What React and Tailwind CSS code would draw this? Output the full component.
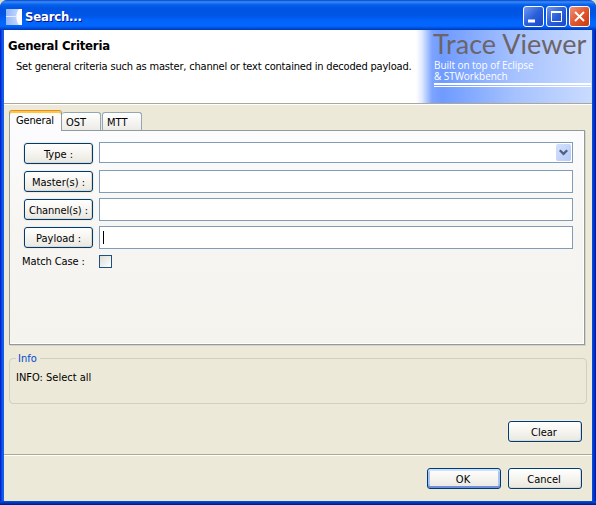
import React from 'react';

function CommandButton({ children, className = '', primary = false }) {
  return (
    <button
      className={`flex shrink-0 items-center justify-center whitespace-nowrap rounded-[3px] border border-[#003c74] bg-linear-to-b from-white via-[#f5f4ef] to-[#e9e7df] pt-0.5 text-[11px] leading-[13px] ${
        primary
          ? 'shadow-[inset_0_2px_0_#cee0fc,inset_0_-2px_0_#6d8fdd,inset_2px_0_0_#a9c3f3,inset_-2px_0_0_#a9c3f3]'
          : 'shadow-[inset_-1px_-1px_0_#dcd8cf,0_0_0_1px_#f0eee3]'
      } ${className}`}
    >
      {children}
    </button>
  );
}

function FieldRow({ label, spacing = '', children, height = 'h-[23px]' }) {
  return (
    <div className="flex h-7 items-start">
      <CommandButton className={`mr-1.5 mt-px h-[21px] w-[69px] ${spacing}`}>{label}</CommandButton>
      <div className={`flex w-[474px] items-center border border-[#7f9db9] bg-white ${height}`}>{children}</div>
    </div>
  );
}

function TitleButton({ close = false, children }) {
  return (
    <button
      className={`flex h-[21px] w-[21px] items-center justify-center rounded-[3px] border border-white ${
        close
          ? 'bg-linear-to-br from-[#ee9077] via-[#e2562e] to-[#c93b0c]'
          : 'bg-linear-to-br from-[#7397ee] via-[#2a5fdc] to-[#1c49c8]'
      }`}
    >
      <svg width="19" height="19" viewBox="0 0 19 19" fill="none">
        {children}
      </svg>
    </button>
  );
}

function TitleBar() {
  return (
    <header className="flex h-[30px] shrink-0 items-center rounded-t-[7px] bg-[linear-gradient(to_bottom,#0144d0_0px,#3f8cf5_2px,#2176f2_3px,#0360ed_5px,#0054e3_8px,#0055e5_15px,#0264fb_21px,#0267ff_26px,#0050dc_28px,#0038b8_30px)] pl-1.5 pr-[6px] pt-[3px]">
      <svg width="16" height="16" viewBox="0 0 16 16">
        <defs>
          <linearGradient id="app" x1="0" x2="1" y1="0" y2="0">
            <stop offset="0" stopColor="#8fb5fb" />
            <stop offset="1" stopColor="#d4e3ff" />
          </linearGradient>
        </defs>
        <rect width="16" height="16" fill="url(#app)" />
        <path d="M0 7.5h10" stroke="#e3edff" />
        <path d="M13 0h3v16h-3C10 12 9 5 13 0z" fill="#fff" />
      </svg>
      <h1 className="ml-[3px] grow whitespace-nowrap text-[13px] font-bold leading-4 tracking-[-0.2px] text-white [text-shadow:1px_1px_0_#0f1089]">
        Search...
      </h1>
      <div className="flex gap-0.5">
        <TitleButton>
          <path d="M4 14h7" stroke="#fff" strokeWidth="3" />
        </TitleButton>
        <TitleButton>
          <path d="M4.5 4.5h10v10h-10z" stroke="#fff" />
          <path d="M4 5h11" stroke="#fff" strokeWidth="2" />
        </TitleButton>
        <TitleButton close>
          <path d="M5 5l9 9M14 5l-9 9" stroke="#fff" strokeWidth="2" />
        </TitleButton>
      </div>
    </header>
  );
}

function Banner() {
  return (
    <section className="flex h-[73px] shrink-0 bg-white">
      <div className="w-[412px] shrink-0 whitespace-nowrap">
        <h2 className="ml-1 mt-2 text-[13px] font-bold leading-[15px] tracking-[-0.2px]">General Criteria</h2>
        <p className="ml-3 mt-[7px] text-[11px] leading-[14px] tracking-[-0.19px]">
          Set general criteria such as master, channel or text contained in decoded payload.
        </p>
      </div>
      <div className="w-44 bg-[linear-gradient(to_right,#fff_0px,#dfe9ff_6px,#7da4ff_16px,#6f9bff_26px,#a6c2ff_100px,#c9dbff_176px)] pl-[17px] whitespace-nowrap text-white [font-stretch:normal]">
        <div className="h-[29px] font-['Lato'] text-[27px] leading-[27px] tracking-[0.05px] text-[#6d6468]">Trace Viewer</div>
        <div className="h-6 pl-px pt-px font-['Open_Sans'] text-[10px] leading-[11px] tracking-[-0.05px]">
          <div>Built on top of Eclipse</div>
          <div>&amp; STWorkbench</div>
        </div>
        <div className="ml-px h-1 w-[157px] border-b border-t-2 border-white" />
      </div>
    </section>
  );
}

function Tab({ children, className }) {
  return (
    <div className={`mt-0.5 h-[18px] rounded-t-[3px] border border-b-0 border-[#91a7b4] bg-linear-to-b from-white to-[#ecebe6] pl-1 pt-[3px] text-[11px] leading-[14px] ${className}`}>
      {children}
    </div>
  );
}

function CriteriaTabs() {
  return (
    <section className="ml-[5px] mt-[5px] w-[576px] shrink-0">
      <nav className="flex h-5">
        <div className="z-10 h-[21px] w-[53px] rounded-t-[3px] border-x border-t border-x-[#919b9c] border-t-[#e68b2c] bg-[#fcfcfe] pl-1.5 pt-[3px] text-[11px] leading-[14px] tracking-[-0.15px] shadow-[inset_0_2px_0_#ffc73c]">
          General
        </div>
        <Tab className="w-[39px] border-l-0">OST</Tab>
        <Tab className="ml-px w-10">MTT</Tab>
      </nav>
      <div className="h-[215px] border border-[#919b9c] bg-linear-to-b from-[#fcfcfe] via-[#f6f5f1] to-[#f4f3ee] pl-3.5 pt-[11px] shadow-[inset_-1px_-1px_0_#fff,1px_1px_0_#d7d3c2]">
        <FieldRow label="Type :" height="h-[21px]">
          <div className="ml-auto mr-px flex h-[17px] w-[15px] items-center justify-center rounded-[2px] bg-linear-to-br from-[#d5e1fd] to-[#b5caf8]">
            <svg width="9" height="7" viewBox="0 0 9 7" fill="none">
              <path d="M.8 1.2l3.7 3.6 3.7-3.6" stroke="#4d6185" strokeWidth="2.3" />
            </svg>
          </div>
        </FieldRow>
        <FieldRow label="Master(s) :" />
        <FieldRow label="Channel(s) :" spacing="tracking-[-0.1px]" />
        <FieldRow label="Payload :">
          <span className="ml-[3px] h-[13px] w-px bg-black" />
        </FieldRow>
        <div className="-ml-0.5 mt-px flex h-[13px] items-center text-[11px] leading-[13px]">
          <span className="w-[77px] whitespace-nowrap tracking-[-0.1px]">Match Case :</span>
          <span className="h-[13px] w-[13px] border border-[#1c5180] bg-linear-to-br from-[#dcdcd7] to-white" />
        </div>
      </div>
    </section>
  );
}

export default function App() {
  return (
    <div className="h-[505px] w-[596px] overflow-hidden bg-[#d8dfd0] text-black [font-family:'DejaVu_Sans_Condensed','DejaVu_Sans',sans-serif] [font-stretch:condensed]">
      <main className="flex h-full flex-col overflow-hidden rounded-t-[7px] bg-[linear-gradient(to_right,#0019cf_0px,#0831d9_1px,#166aee_3px,#0855dd_4px,#0855dd_592px,#0441d8_593px,#0029c0_595px,#00138c_596px)]">
        <TitleBar />
        <div className="mx-1 flex h-[471px] shrink-0 flex-col bg-[#ece9d8]">
          <Banner />
          <div className="h-0.5 shrink-0 border-b border-t border-b-white border-t-[#aca899]" />
          <CriteriaTabs />
          <fieldset className="ml-[5px] mt-[7px] h-[52px] w-[578px] shrink-0 rounded-[4px] border border-[#d0d0bf] pl-1.5">
            <legend className="whitespace-nowrap pl-0.5 pr-[3px] text-[11px] leading-[13px] text-[#0046d5]">Info</legend>
            <p className="mt-1.5 whitespace-nowrap text-[11px] leading-[14px]">INFO: Select all</p>
          </fieldset>
          <div className="mr-2.5 mt-[17px] flex justify-end">
            <CommandButton className="h-[21px] w-[74px] pr-0.5">Clear</CommandButton>
          </div>
          <div className="mt-3 h-0.5 shrink-0 border-b border-t border-b-white border-t-[#aca899]" />
          <div className="mr-2.5 mt-3 flex justify-end gap-[7px]">
            <CommandButton primary className="h-[21px] w-[74px] pr-0.5">OK</CommandButton>
            <CommandButton className="h-[21px] w-[74px] pr-0.5">Cancel</CommandButton>
          </div>
        </div>
        <div className="h-1 shrink-0 bg-linear-to-b from-[#0855dd] to-[#00138c]" />
      </main>
    </div>
  );
}
